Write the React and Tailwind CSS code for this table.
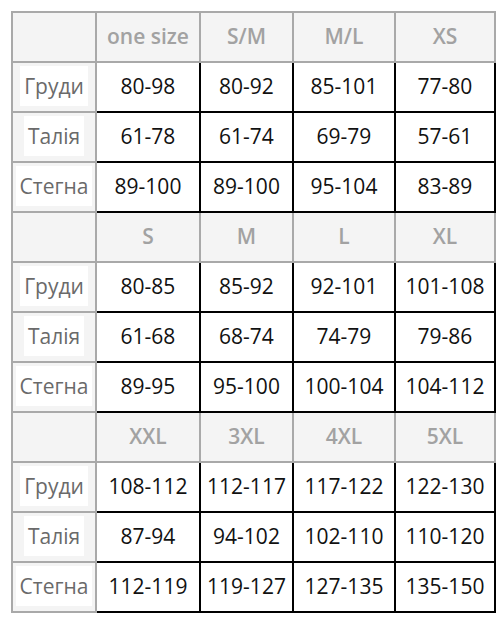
import React from "react";

const blocks = [
  {
    sizes: ["one size", "S/M", "M/L", "XS"],
    rows: [
      ["Груди", "80-98", "80-92", "85-101", "77-80"],
      ["Талія", "61-78", "61-74", "69-79", "57-61"],
      ["Стегна", "89-100", "89-100", "95-104", "83-89"],
    ],
  },
  {
    sizes: ["S", "M", "L", "XL"],
    rows: [
      ["Груди", "80-85", "85-92", "92-101", "101-108"],
      ["Талія", "61-68", "68-74", "74-79", "79-86"],
      ["Стегна", "89-95", "95-100", "100-104", "104-112"],
    ],
  },
  {
    sizes: ["XXL", "3XL", "4XL", "5XL"],
    rows: [
      ["Груди", "108-112", "112-117", "117-122", "122-130"],
      ["Талія", "87-94", "94-102", "102-110", "110-120"],
      ["Стегна", "112-119", "119-127", "127-135", "135-150"],
    ],
  },
];

export default function App() {
  return (
    <div className="w-[504px] h-[622px] bg-white pt-[11px] pl-[11px]" style={{ fontFamily: '"Open Sans", "Noto Sans", sans-serif' }}>
      <table className="border-collapse table-fixed w-[483px]">
        <colgroup>
          <col className="w-[84px]" />
          <col className="w-[104px]" />
          <col className="w-[93px]" />
          <col className="w-[102px]" />
          <col className="w-[100px]" />
        </colgroup>
        <tbody>
          {blocks.map((block, bi) => (
            <React.Fragment key={bi}>
              <tr className="h-[50px]">
                <td className="border-2 border-[#a9a9a9] bg-[#f4f4f4]"></td>
                {block.sizes.map((s) => (
                  <td key={s} className="border-2 border-[#a9a9a9] bg-[#f4f4f4] text-center text-[21px] font-semibold text-[#a2a2a2]">
                    {s}
                  </td>
                ))}
              </tr>
              {block.rows.map((row) => (
                <tr key={row[0]} className="h-[50px]">
                  <td className="border-2 border-[#a9a9a9] bg-[#f4f4f4] text-center">
                    <span className="bg-white px-[4px] py-[6px] text-[21px] text-[#6a6a6a]">{row[0]}</span>
                  </td>
                  {row.slice(1).map((v, i) => (
                    <td key={i} className="border-2 border-black bg-white text-center text-[21px] text-[#111]">
                      {v}
                    </td>
                  ))}
                </tr>
              ))}
            </React.Fragment>
          ))}
        </tbody>
      </table>
    </div>
  );
}
